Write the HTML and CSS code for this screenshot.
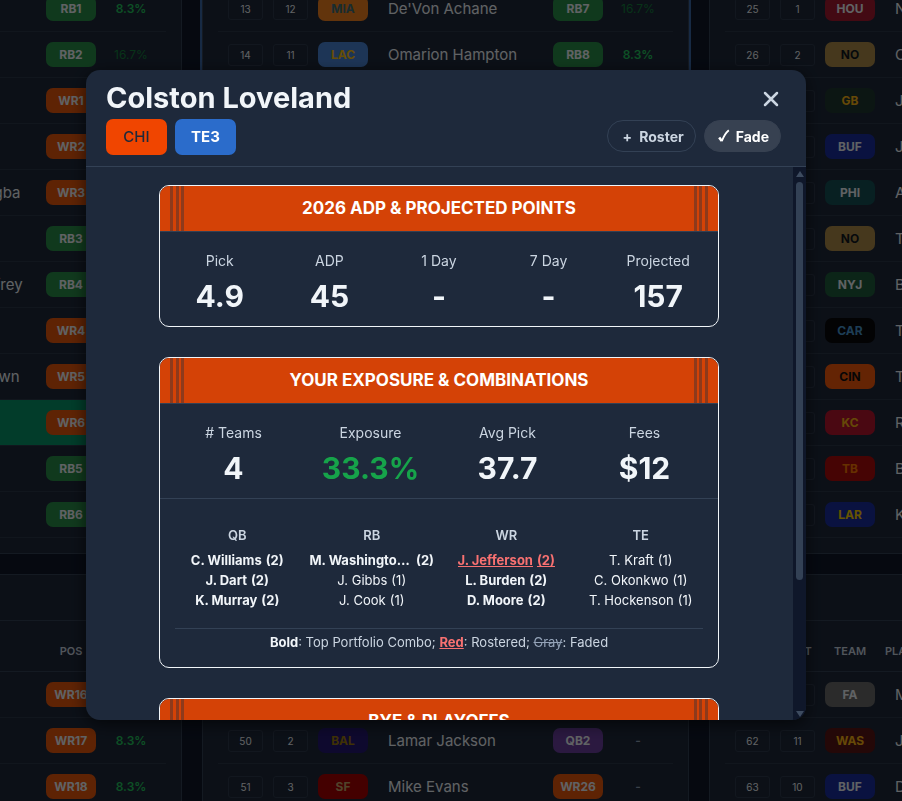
FILE: index.html
```html
<!DOCTYPE html>
<html lang="en">
<head>
    <meta charset="UTF-8">
    <meta name="viewport" content="width=device-width, initial-scale=1.0">
    <title>Draft Rankings</title>
    <link rel="stylesheet" href="styles.css">
    <script src="board.js" defer></script>
</head>
<body>
    <main class="page">
        <div class="board" id="board"></div>
    </main>

    <div class="overlay">
        <section class="modal" role="dialog" aria-modal="true" aria-labelledby="playerName">
            <header class="modal-header">
                <div class="modal-row">
                    <h2 class="player-name" id="playerName">Colston Loveland</h2>
                    <button class="close-btn" type="button" aria-label="Close">
                        <svg width="16" height="16" viewBox="0 0 16 16" fill="none" stroke="currentColor" stroke-width="2.500" stroke-linecap="round"><path d="M2 2 14 14M14 2 2 14"/></svg>
                    </button>
                </div>
                <div class="modal-row">
                    <div class="tags">
                        <span class="tag tag-team">CHI</span>
                        <span class="tag tag-pos">TE3</span>
                    </div>
                    <div class="actions">
                        <button class="pill" type="button"><span class="pill-icon">+</span>Roster</button>
                        <button class="pill active" type="button"><svg width="12" height="14" viewBox="0 0 12 14" fill="none" stroke="currentColor"><path d="M1.200 8.500 3.800 12" stroke-width="2.600"/><path d="M3.800 12.200C5.500 7.500 7.500 4 10.800 1.200" stroke-width="1.800"/></svg>Fade</button>
                    </div>
                </div>
            </header>

            <div class="modal-main">
                <div class="modal-body">
                    <section class="panel">
                        <h3 class="panel-title">2026 ADP &amp; PROJECTED POINTS</h3>
                        <dl class="stats">
                            <div class="stat"><dt>Pick</dt><dd>4.9</dd></div>
                            <div class="stat"><dt>ADP</dt><dd>45</dd></div>
                            <div class="stat"><dt>1 Day</dt><dd>-</dd></div>
                            <div class="stat"><dt>7 Day</dt><dd>-</dd></div>
                            <div class="stat"><dt>Projected</dt><dd>157</dd></div>
                        </dl>
                    </section>

                    <section class="panel">
                        <h3 class="panel-title">YOUR EXPOSURE &amp; COMBINATIONS</h3>
                        <dl class="stats">
                            <div class="stat"><dt># Teams</dt><dd>4</dd></div>
                            <div class="stat"><dt>Exposure</dt><dd class="good">33.3%</dd></div>
                            <div class="stat"><dt>Avg Pick</dt><dd>37.7</dd></div>
                            <div class="stat"><dt>Fees</dt><dd>$12</dd></div>
                        </dl>
                        <div class="combos">
                            <div class="combo-grid">
                                <div class="combo">
                                    <h4>QB</h4>
                                    <ul>
                                        <li class="top"><span class="who">C. Williams</span><span>(2)</span></li>
                                        <li class="top"><span class="who">J. Dart</span><span>(2)</span></li>
                                        <li class="top"><span class="who">K. Murray</span><span>(2)</span></li>
                                    </ul>
                                </div>
                                <div class="combo">
                                    <h4>RB</h4>
                                    <ul>
                                        <li class="top"><span class="who">M. Washington Jr.</span><span>(2)</span></li>
                                        <li><span class="who">J. Gibbs</span><span>(1)</span></li>
                                        <li><span class="who">J. Cook</span><span>(1)</span></li>
                                    </ul>
                                </div>
                                <div class="combo">
                                    <h4>WR</h4>
                                    <ul>
                                        <li class="top rostered"><span class="who">J. Jefferson</span><span>(2)</span></li>
                                        <li class="top"><span class="who">L. Burden</span><span>(2)</span></li>
                                        <li class="top"><span class="who">D. Moore</span><span>(2)</span></li>
                                    </ul>
                                </div>
                                <div class="combo">
                                    <h4>TE</h4>
                                    <ul>
                                        <li><span class="who">T. Kraft</span><span>(1)</span></li>
                                        <li><span class="who">C. Okonkwo</span><span>(1)</span></li>
                                        <li><span class="who">T. Hockenson</span><span>(1)</span></li>
                                    </ul>
                                </div>
                            </div>
                            <p class="legend"><b>Bold</b>: Top Portfolio Combo; <b class="rostered">Red</b>: Rostered; <s>Gray</s>: Faded</p>
                        </div>
                    </section>

                    <section class="panel">
                        <h3 class="panel-title">BYE &amp; PLAYOFFS</h3>
                    </section>
                </div>

                <div class="scrollbar" aria-hidden="true">
                    <svg width="8" height="6" viewBox="0 0 8 6"><path d="M4 0 8 6H0z"/></svg>
                    <div class="track"><div class="thumb"></div></div>
                    <svg width="8" height="6" viewBox="0 0 8 6"><path d="M0 0H8L4 6z"/></svg>
                </div>
            </div>
        </section>
    </div>
</body>
</html>
```

FILE: styles.css
```css
*{
    box-sizing: border-box;
    margin: 0;
    padding: 0;
}

body{
    background: #0f172a;
    color: #f1f5f9;
    font-family: Inter, "Liberation Sans", sans-serif;
    font-size: 15px;
    overflow: hidden;
}

button{
    font-family: inherit;
    cursor: pointer;
}

/* ---- draft board ---- */
.page{
    height: 100vh;
    overflow: hidden;
}

.board{
    display: grid;
    grid-template-columns: repeat(3, 487px);
    gap: 20px;
    justify-content: center;
    margin-top: -15px;
    padding-right: 11px;
}

.round{
    padding: 0 15px 15px;
    background: #1e293b;
    border: 1px solid #334155;
}

.round.current{
    box-shadow: 0 0 0 2px #3b6aaa;
}

.round-title{
    height: 46px;
    margin: 0 -15px;
    border-bottom: 1px solid #334155;
}

.round table{
    width: 100%;
    table-layout: fixed;
    border-collapse: separate;
    border-spacing: 0;
}

.c-pick{ width: 50px; }
.c-slot{ width: 45px; }
.c-team{ width: 60px; }
.c-pos{ width: 60px; }
.c-exp{ width: 65px; }

.round th{
    height: 51px;
    padding-top: 10px;
    border-bottom: 1px solid #334155;
    color: #cbd5e1;
    font-size: 11px;
    font-weight: 600;
    text-align: center;
}

.round th:nth-child(4){
    padding-left: 5px;
    text-align: left;
}

.round td{
    height: 46px;
    border-bottom: 1px solid #2c384a;
    text-align: center;
    vertical-align: middle;
}

.round td:first-child{
    padding-left: 5px;
}

.round td:last-child{
    padding-right: 5px;
}

.round td.name{
    padding-left: 15px;
    text-align: left;
    white-space: nowrap;
}

.round tr.selected td{
    background: #059669;
}

.num{
    display: block;
    width: 35px;
    margin: 0 auto;
    border: 1px solid #2f3b4e;
    border-radius: 3px;
    font-size: 10px;
    line-height: 20px;
}

.badge{
    display: block;
    width: 50px;
    margin: 0 auto;
    border-radius: 7px;
    font-size: 12px;
    font-weight: 700;
    line-height: 25px;
}

.pct{
    display: block;
    color: #22c55e;
    font-size: 12px;
    font-weight: 600;
    line-height: 20px;
}

.pct.high{
    color: #15803d;
    font-weight: 400;
}

.pct.none{
    color: #94a3b8;
}

.RB{ background: #2a904a; }
.WR{ background: #ea580c; }
.QB{ background: #6b3fa0; }

.MIA{ background: #f58220; color: #3f6f78; }
.LAC{ background: #4a86d8; color: #ffc20e; }
.HOU{ background: #a71930; }
.NO{ background: #b08c4a; color: #101820; }
.GB{ background: #203731; color: #ffb612; }
.BUF{ background: #1a2fa0; }
.PHI{ background: #155055; }
.NYJ{ background: #1f5c3c; }
.CAR{ background: #08080c; color: #4a9ad4; }
.CIN{ background: #fb5a0a; color: #101010; }
.KC{ background: #b8142f; color: #ffb612; }
.TB{ background: #b00a0a; color: #ff7900; }
.LAR{ background: #1a2fa0; color: #ffd100; }
.FA{ background: #6b6b6b; }
.WAS{ background: #5a1414; color: #ffb612; }
.BAL{ background: #241773; color: #9e7c0c; }
.SF{ background: #aa0000; color: #c9a86a; }

/* ---- player modal ---- */
.overlay{
    position: fixed;
    inset: 0;
    display: flex;
    align-items: flex-start;
    justify-content: center;
    padding: 70px 96px 81px 86px;
    background: rgba(0, 0, 0, 0.6);
}

.modal{
    display: flex;
    flex-direction: column;
    width: 100%;
    max-width: 720px;
    height: 100%;
    overflow: hidden;
    background: #1e293b;
    border-radius: 14px;
    box-shadow: 0 4px 16px rgba(0, 0, 0, 0.6);
}

.modal-header{
    padding: 10px 25px 10px 20px;
    border-bottom: 1px solid #334155;
}

.modal-row{
    display: flex;
    align-items: center;
    justify-content: space-between;
}

.player-name{
    font-size: 29px;
    font-weight: 700;
    line-height: 36px;
}

.close-btn{
    display: flex;
    padding: 4px 2px 2px;
    background: none;
    border: none;
    color: #cbd5e1;
}

.tags,
.actions{
    display: flex;
    gap: 8px;
}

.tags{
    padding: 3px 0 1px;
}

.tag{
    width: 61px;
    border-radius: 7px;
    font-size: 15px;
    line-height: 36px;
    text-align: center;
}

.tag-team{
    background: #f04500;
    color: #1e293b;
    font-weight: 500;
}

.tag-pos{
    background: #2b6ccb;
    color: #fff;
    font-weight: 700;
}

.pill{
    display: flex;
    align-items: center;
    gap: 6px;
    height: 32px;
    padding: 0 11px 0 13px;
    background: none;
    border: 1px solid #334155;
    border-radius: 16px;
    color: #cbd5e1;
    font-size: 14px;
    font-weight: 700;
}

.pill-icon{
    width: 12px;
    text-align: center;
}

.pill.active{
    background: #374151;
    border-color: #374151;
    color: #fff;
}

.modal-main{
    display: flex;
    flex: 1;
    min-height: 0;
}

.modal-body{
    flex: 1;
    padding: 18px 74px 0 73px;
    overflow: hidden;
}

.panel{
    margin-bottom: 30px;
    overflow: hidden;
    border: 1px solid #f1f5f9;
    border-radius: 10px;
}

.panel-title{
    position: relative;
    border-bottom: 1px solid #334155;
    background: #d44206;
    color: #fff;
    font-size: 17px;
    font-weight: 700;
    line-height: 45px;
    text-align: center;
}

/* jersey stripes on both ends */
.panel-title::before,
.panel-title::after{
    content: "";
    position: absolute;
    top: 0;
    bottom: 0;
    left: 10px;
    width: 14px;
    background: linear-gradient(90deg, #8d3a1c 3px, transparent 3px 6px, #8d3a1c 6px 9px, transparent 9px 11px, #8d3a1c 11px);
}

.panel-title::after{
    right: 10px;
    left: auto;
    transform: scaleX(-1);
}

.stats{
    display: flex;
    padding: 17px 5px 12px;
}

.stat{
    flex: 1;
    text-align: center;
}

.stat dt{
    color: #cbd5e1;
    font-size: 14px;
    line-height: 24px;
}

.stat dd{
    font-size: 30px;
    font-weight: 700;
    line-height: 36px;
    padding-top: 5px;
}

.stat .good{
    color: #16a34a;
}

.combos{
    padding: 24px 15px 15px;
    border-top: 1px solid #334155;
}

.combo-grid{
    display: grid;
    grid-template-columns: repeat(4, 1fr);
    gap: 10px;
    padding-bottom: 18px;
    border-bottom: 1px solid #334155;
    font-size: 13px;
}

.combo{
    min-width: 0;
    text-align: center;
}

.combo h4{
    margin-bottom: 3px;
    color: #cbd5e1;
    font-size: 13px;
    font-weight: 600;
    line-height: 24px;
}

.combo ul{
    list-style: none;
}

.combo li{
    display: flex;
    justify-content: center;
    gap: 4px;
    line-height: 20px;
}

.who{
    max-width: 104px;
    overflow: hidden;
    text-overflow: ellipsis;
    white-space: nowrap;
}

.top{
    font-weight: 700;
}

.rostered{
    color: #f87171;
    text-decoration: underline;
}

.legend{
    padding-top: 3px;
    color: #cbd5e1;
    font-size: 13px;
    line-height: 20px;
    text-align: center;
}

.legend b:first-child{
    color: #f1f5f9;
}

.legend s{
    color: #94a3b8;
}

.scrollbar{
    display: flex;
    flex-direction: column;
    align-items: center;
    width: 13px;
    padding: 4px 0 3px;
    background: #0f172a;
}

.scrollbar svg{
    fill: #3d4b5f;
}

.track{
    flex: 1;
    width: 7px;
    padding: 5px 0;
}

.thumb{
    height: 76%;
    background: #334155;
    border-radius: 4px;
}
```

FILE: board.js
```js
// pick, slot, team, player, position, exposure
const rounds = [
    { rows: [
        [1, 1, "", "Bijan Robinson", "RB1", "8.3%"],
        [2, 2, "", "Jahmyr Gibbs", "RB2", "16.7%"],
        [3, 3, "", "Ja'Marr Chase", "WR1", ""],
        [4, 4, "", "Puka Nacua", "WR2", ""],
        [5, 5, "", "Jaxon Smith-Njigba", "WR3", ""],
        [6, 6, "", "Jon Taylor", "RB3", ""],
        [7, 7, "", "Christian McCaffrey", "RB4", ""],
        [8, 8, "", "CeeDee Lamb", "WR4", ""],
        [9, 9, "", "Amon-Ra St. Brown", "WR5", ""],
        [10, 10, "", "J. Jefferson", "WR6", "", "selected"],
        [11, 11, "", "James Cook", "RB5", ""],
        [12, 12, "", "A. Jeanty", "RB6", ""]
    ]},
    { current: true, rows: [
        [13, 12, "MIA", "De'Von Achane", "RB7", "16.7%"],
        [14, 11, "LAC", "Omarion Hampton", "RB8", "8.3%"]
    ]},
    { rows: [
        [25, 1, "HOU", "Nico Collins", "WR10", ""],
        [26, 2, "NO", "Chris Olave", "WR11", ""],
        [27, 3, "GB", "Josh Jacobs", "RB11", ""],
        [28, 4, "BUF", "Josh Allen", "QB1", ""],
        [29, 5, "PHI", "A.J. Brown", "WR12", ""],
        [30, 6, "NO", "Travis Etienne", "RB12", ""],
        [31, 7, "NYJ", "Breece Hall", "RB13", ""],
        [32, 8, "CAR", "Tetairoa McMillan", "WR13", ""],
        [33, 9, "CIN", "Tee Higgins", "WR14", ""],
        [34, 10, "KC", "Rashee Rice", "WR15", ""],
        [35, 11, "TB", "Bucky Irving", "RB14", ""],
        [36, 12, "LAR", "Kyren Williams", "RB15", ""]
    ]},
    { header: true, rows: [
        [37, 12, "", "", "WR16", ""],
        [38, 11, "", "", "WR17", "8.3%"],
        [39, 10, "", "", "WR18", "8.3%"]
    ]},
    { header: true, rows: [
        [49, 1, "", "", "WR25", ""],
        [50, 2, "BAL", "Lamar Jackson", "QB2", "-"],
        [51, 3, "SF", "Mike Evans", "WR26", "-"]
    ]},
    { header: true, rows: [
        [61, 12, "FA", "Mike", "WR30", ""],
        [62, 11, "WAS", "Jayden Daniels", "QB3", ""],
        [63, 10, "BUF", "DJ Moore", "WR31", ""]
    ]}
];

function pctClass(value){
    if(value == "-") return "pct none";
    return parseFloat(value) > 10 ? "pct high" : "pct";
}

function printRound(round){
    let tag = `<section class="round ${round.current ? "current" : ""}">`;
    if(round.header) tag += `<div class="round-title"></div>`;
    tag += `<table><colgroup><col class="c-pick"><col class="c-slot"><col class="c-team"><col><col class="c-pos"><col class="c-exp"></colgroup>`;
    if(round.header){
        tag += "<tr><th>PICK</th><th>SLOT</th><th>TEAM</th><th>PLAYER</th><th>POS</th><th>EXP</th></tr>";
    }
    for(const [pick, slot, team, name, pos, exp, state] of round.rows){
        tag += `<tr class="${state || ""}">`;
        tag += `<td><span class="num">${pick}</span></td><td><span class="num">${slot}</span></td>`;
        tag += `<td><span class="badge ${team}">${team}</span></td><td class="name">${name}</td>`;
        tag += `<td><span class="badge ${pos.slice(0, 2)}">${pos}</span></td>`;
        tag += `<td><span class="${pctClass(exp)}">${exp}</span></td></tr>`;
    }
    return tag + "</table></section>";
}

document.getElementById("board").innerHTML = rounds.map(printRound).join("");
```
